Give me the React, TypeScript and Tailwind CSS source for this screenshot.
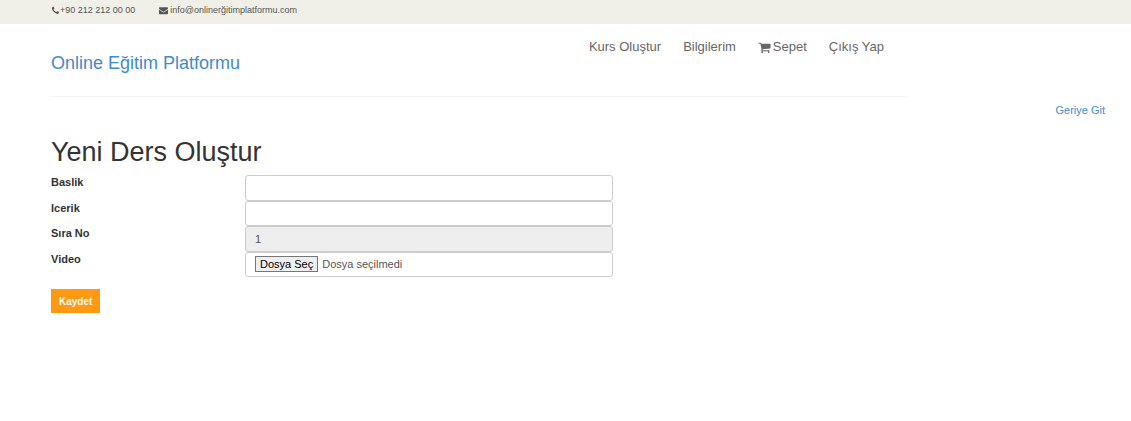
import { useRef, useState } from "react";

const icons = {
  phone:
    "M1600 1240q0 27-10 70.5t-21 68.5q-21 50-122 106-94 51-186 51-27 0-53-3.5t-57.5-12.5-47-14.5-55.5-20.5-49-18q-98-35-175-83-127-79-264-216t-216-264q-48-77-83-175-3-9-18-49t-20.5-55.5-14.5-47-12.5-57.5-3.5-53q0-92 51-186 56-101 106-122 25-11 68.5-21t70.5-10q14 0 21 3 18 6 53 76 11 19 30 54t35 63.5 31 53.5q3 4 17.5 25t21.5 35.5 7 28.5q0 20-28.5 50t-62 55-62 53-28.5 46q0 9 5 22.5t8.5 20.5 14 24 11.5 19q76 137 174 235t235 174q2 1 19 11.5t24 14 20.5 8.5 22.5 5q18 0 46-28.5t53-62 55-62 50-28.5q14 0 28.5 7t35.5 21.5 25 17.5q25 15 53.5 31t63.5 35 54 30q70 35 76 53 3 7 3 21z",
  envelope:
    "M1792 710v794q0 66-47 113t-113 47h-1472q-66 0-113-47t-47-113v-794q44 49 101 87 362 246 497 345 57 42 92.5 65.5t94.5 48 110 24.5h2q51 0 110-24.5t94.5-48 92.5-65.5q170-123 498-345 57-39 100-87zm0-294q0 79-49 151t-122 123q-376 261-468 325-10 7-42.5 31t-54 38.5-52 32.5-57.5 27-50 9h-2q-23 0-50-9t-57.5-27-52-32.5-54-38.5-42.5-31q-91-64-262-182.5t-205-142.5q-62-42-117-115.5t-55-136.5q0-78 41.5-130t118.5-52h1472q65 0 112.5 47t47.5 113z",
  cart:
    "M704 1536q0 52-38 90t-90 38-90-38-38-90 38-90 90-38 90 38 38 90zm896 0q0 52-38 90t-90 38-90-38-38-90 38-90 90-38 90 38 38 90zm128-1088v512q0 24-16.5 42.5t-40.5 21.5l-1044 122q13 60 13 70 0 16-24 64h920q26 0 45 19t19 45-19 45-45 19h-1024q-26 0-45-19t-19-45q0-11 8-31.5t16-36 21.5-40 15.5-29.5l-177-823h-204q-26 0-45-19t-19-45 19-45 45-19h256q16 0 28.5 6.5t19.5 15.5 13 24.5 8 26 5.5 29.5 4.5 26h1201q26 0 45 19t19 45z",
};

type IconName = keyof typeof icons;

function Icon({ name, className }: { name: IconName; className: string }) {
  return (
    <svg viewBox="0 0 1792 1792" fill="currentColor" aria-hidden="true" className={className}>
      <path d={icons[name]} />
    </svg>
  );
}

const navLinks: { label: string; icon?: IconName }[] = [
  { label: "Kurs Oluştur" },
  { label: "Bilgilerim" },
  { label: "Sepet", icon: "cart" },
  { label: "Çıkış Yap" },
];

const labelClass = "pt-px text-[11px] leading-3 font-bold text-[#333333]";
const fieldClass =
  "h-full w-full min-w-0 rounded-[3px] border border-[#cccccc] bg-white px-[9px] text-[11px] text-[#555555] read-only:bg-[#eeeeee]";

function TopBar() {
  return (
    <div className="flex h-6 items-start gap-6 bg-[#f0f0e8] px-[51px] pt-1 text-[9px] leading-3 text-[#555555]">
      <span className="flex items-center">
        <Icon name="phone" className="size-[9px]" />
        +90 212 212 00 00
      </span>
      <span className="flex items-center gap-0.5">
        <Icon name="envelope" className="size-[9px]" />
        info@onlinerğitimplatformu.com
      </span>
    </div>
  );
}

function Header() {
  return (
    <header className="ml-[51px] flex h-[73px] max-w-[855px] items-start justify-between border-b border-[#f3f3f3] pr-[22px]">
      <a href="#" className="pt-[27px] text-[18px] leading-6 text-[#428bca]">
        Online Eğitim Platformu
      </a>
      <nav className="flex gap-[22px] pt-[15px] text-[13px] leading-4 text-[#666666]">
        {navLinks.map((link) => (
          <a key={link.label} href="#" className="flex items-center gap-0.5">
            {link.icon && <Icon name={link.icon} className="size-[13px]" />}
            {link.label}
          </a>
        ))}
      </nav>
    </header>
  );
}

function LessonForm() {
  const fileInput = useRef<HTMLInputElement>(null);
  const [fileName, setFileName] = useState("Dosya seçilmedi");

  return (
    <form onSubmit={(event) => event.preventDefault()}>
      <div className="grid h-[102px] max-w-[562px] grid-cols-[194px_1fr] grid-rows-4">
        <label htmlFor="title" className={labelClass}>
          Baslik
        </label>
        <input id="title" type="text" className={fieldClass} />
        <label htmlFor="content" className={labelClass}>
          Icerik
        </label>
        <input id="content" type="text" className={fieldClass} />
        <label htmlFor="order" className={labelClass}>
          Sıra No
        </label>
        <input id="order" type="text" value="1" readOnly className={fieldClass} />
        <label htmlFor="video" className={labelClass}>
          Video
        </label>
        <div className="flex h-full items-center gap-1 rounded-[3px] border border-[#cccccc] bg-white px-[9px] text-[11px] text-[#555555]">
          <button
            type="button"
            onClick={() => fileInput.current?.click()}
            className="h-4 border border-[#767676] bg-[#efefef] px-1 leading-[14px] text-black"
          >
            Dosya Seç
          </button>
          <span>{fileName}</span>
          <input
            ref={fileInput}
            id="video"
            type="file"
            className="hidden"
            onChange={(event) =>
              setFileName(event.target.files?.[0]?.name ?? "Dosya seçilmedi")
            }
          />
        </div>
      </div>
      <button
        type="submit"
        className="mt-3 h-6 bg-[#ff9912] px-2 text-[10px] font-bold text-white"
      >
        Kaydet
      </button>
    </form>
  );
}

export default function App() {
  return (
    <div className="min-h-screen bg-white font-['Liberation_Sans',Arial,sans-serif]">
      <TopBar />
      <Header />
      <div className="flex justify-end pt-[5px] pr-[26px] text-[11px] leading-4 text-[#428bca]">
        <a href="#">Geriye Git</a>
      </div>
      <main className="px-[51px] pt-[18px]">
        <h1 className="mb-[7px] text-[27px] leading-8 text-[#333333]">Yeni Ders Oluştur</h1>
        <LessonForm />
      </main>
    </div>
  );
}
